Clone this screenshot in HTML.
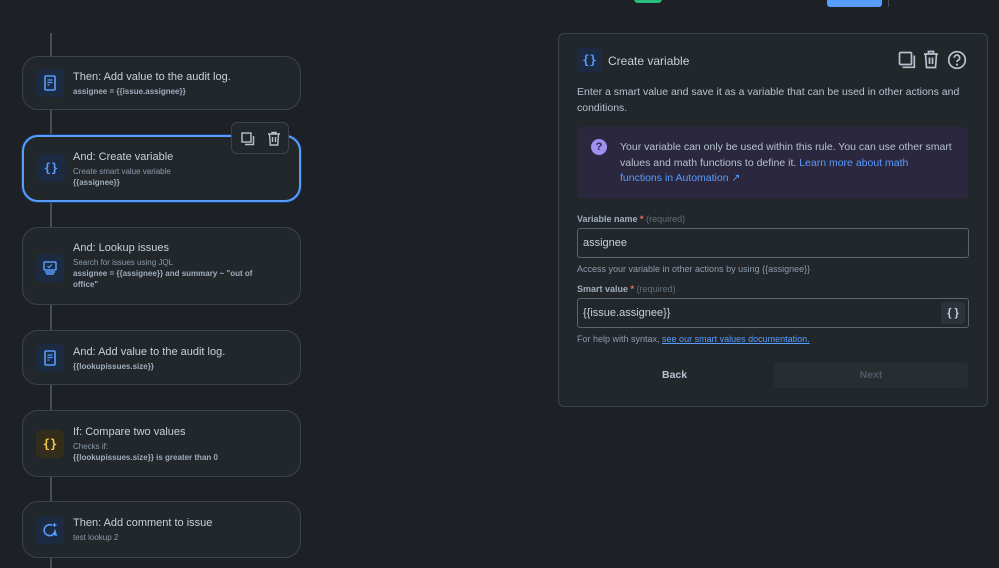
<!DOCTYPE html>
<html><head><style>
*{box-sizing:border-box;margin:0;padding:0}
body{width:999px;height:568px;background:#1d2125;font-family:"Liberation Sans",sans-serif;position:relative;overflow:hidden;color:#b6c2cf}
.line{position:absolute;left:50px;width:2px;background:#454f59}
.card{position:absolute;left:22px;width:279px;border:1px solid #3b444c;border-radius:16px;background:#22272b}
.card.sel{border:2px solid #579dff;box-shadow:0 0 0 1px #1d3a6a}
.ic{position:absolute;left:13px;width:28px;height:28px;border-radius:6px;background:#1c2b41;display:flex;align-items:center;justify-content:center}
.txt{position:absolute;left:50px;right:10px}
.t{font-size:11px;color:#c7d1db;line-height:14px}
.s{font-size:8px;color:#8c9bab;line-height:11px}
.b{font-size:8px;font-weight:bold;color:#9fadbc;line-height:11px}
.br{font-family:"DejaVu Sans Mono",monospace;font-weight:bold;font-size:12px;color:#579dff}
.panel{position:absolute;left:558px;top:33px;width:430px;height:374px;border:1px solid #3b444c;border-radius:6px;background:#22272b}
.lab{position:absolute;left:18px;font-size:9px;font-weight:bold;color:#9fadbc}
.lab i{color:#f87168;font-style:normal}
.lab span{color:#626f7c;font-weight:normal}
.inp{position:absolute;left:18px;width:392px;height:30px;border:1px solid #5a6570;border-radius:3px;background:#22272b;font-size:11px;color:#c7d1db;padding:8px 5px}
.help{position:absolute;left:18px;font-size:9px;color:#8c9bab}
</style></head><body>
<div style="position:absolute;left:634px;top:-5px;width:28px;height:8px;border-radius:4px;background:#2abb7f"></div>
<div style="position:absolute;left:827px;top:0;width:55px;height:7px;border-radius:0 0 3px 3px;background:#579dff"></div>
<div style="position:absolute;left:888px;top:0;width:1px;height:7px;background:#454f59"></div>

<div class="line" style="top:33px;height:535px"></div>

<div class="card" style="top:56px;height:54px">
 <div class="ic" style="top:12px"><svg width="14" height="16" viewBox="0 0 14 16"><rect x="2" y="1" width="10" height="14" rx="1" fill="none" stroke="#579dff" stroke-width="1.6"/><path d="M4.5 5h5M4.5 7.5h5M4.5 10h2" stroke="#579dff" stroke-width="1.3"/></svg></div>
 <div class="txt" style="top:13px"><div class="t">Then: Add value to the audit log.</div><div class="b" style="margin-top:2px">assignee = {{issue.assignee}}</div></div>
</div>

<div class="card sel" style="top:135px;height:67px">
 <div class="ic" style="top:17px"><span class="br">{}</span></div>
 <div class="txt" style="top:13px;left:49px"><div class="t">And: Create variable</div><div class="s" style="margin-top:2px">Create smart value variable</div><div class="b">{{assignee}}</div></div>
</div>
<div style="position:absolute;left:231px;top:122px;width:58px;height:32px;border:1px solid #3b444c;border-radius:6px;background:#22272b">
 <svg style="position:absolute;left:9px;top:9px" width="14" height="14" viewBox="0 0 14 14"><rect x="1" y="1" width="9" height="9" fill="none" stroke="#b6c2cf" stroke-width="1.4"/><path d="M4 12.5h8.5V4" fill="none" stroke="#b6c2cf" stroke-width="1.4"/></svg>
 <svg style="position:absolute;left:35px;top:8px" width="14" height="15" viewBox="0 0 14 15"><path d="M1 3h12M5 3V1.5h4V3M2.5 3l.8 11h7.4l.8-11M5.5 6v5M8.5 6v5" fill="none" stroke="#b6c2cf" stroke-width="1.4"/></svg>
</div>

<div class="card" style="top:227px;height:78px">
 <div class="ic" style="top:26px"><svg width="16" height="16" viewBox="0 0 16 16"><rect x="2" y="2" width="12" height="8" rx="1" fill="none" stroke="#579dff" stroke-width="1.5"/><path d="M5.5 6l1.5 1.5 3-3" fill="none" stroke="#579dff" stroke-width="1.2"/><path d="M3 12h10M4 14h8" stroke="#579dff" stroke-width="1.4"/></svg></div>
 <div class="txt" style="top:13px;right:30px"><div class="t">And: Lookup issues</div><div class="s" style="margin-top:2px">Search for issues using JQL</div><div class="b">assignee = {{assignee}} and summary ~ "out of office"</div></div>
</div>

<div class="card" style="top:330px;height:55px">
 <div class="ic" style="top:13px"><svg width="14" height="16" viewBox="0 0 14 16"><rect x="2" y="1" width="10" height="14" rx="1" fill="none" stroke="#579dff" stroke-width="1.6"/><path d="M4.5 5h5M4.5 7.5h5M4.5 10h2" stroke="#579dff" stroke-width="1.3"/></svg></div>
 <div class="txt" style="top:14px"><div class="t">And: Add value to the audit log.</div><div class="b" style="margin-top:2px">{{lookupissues.size}}</div></div>
</div>

<div class="card" style="top:410px;height:67px">
 <div class="ic" style="top:19px;background:#332e1b"><span class="br" style="color:#f5cd47">{}</span></div>
 <div class="txt" style="top:14px"><div class="t">If: Compare two values</div><div class="s" style="margin-top:2px">Checks if:</div><div class="b">{{lookupissues.size}} is greater than 0</div></div>
</div>

<div class="card" style="top:501px;height:57px">
 <div class="ic" style="top:14px"><svg width="16" height="16" viewBox="0 0 16 16"><path d="M10 3.2A5.5 5.5 0 1 0 13 9.5L14 13l-3.5-1" fill="none" stroke="#579dff" stroke-width="1.6"/><path d="M12.5 1v4M10.5 3h4" stroke="#579dff" stroke-width="1.2"/></svg></div>
 <div class="txt" style="top:14px"><div class="t">Then: Add comment to issue</div><div class="s" style="margin-top:2px">test lookup 2</div></div>
</div>

<div class="panel">
 <div style="position:absolute;left:18px;top:14px;width:25px;height:24px;border-radius:4px;background:#1c2b41;display:flex;align-items:center;justify-content:center"><span class="br">{}</span></div>
 <div style="position:absolute;left:49px;top:20px;font-size:12px;color:#c7d1db">Create variable</div>
 <svg style="position:absolute;left:339px;top:17px" width="18" height="18" viewBox="0 0 18 18"><rect x="1.5" y="1.5" width="12" height="12" rx="1" fill="none" stroke="#b6c2cf" stroke-width="1.7"/><path d="M4.5 16.3h11.8V4.5" fill="none" stroke="#b6c2cf" stroke-width="1.7"/></svg>
 <svg style="position:absolute;left:364px;top:16px" width="16" height="19" viewBox="0 0 16 19"><path d="M1 4h14M5.5 4V1.5h5V4M2.5 4l1 13.5h9l1-13.5M6.5 7.5v6.5M9.5 7.5v6.5" fill="none" stroke="#b6c2cf" stroke-width="1.7"/></svg>
 <svg style="position:absolute;left:388px;top:16px" width="20" height="20" viewBox="0 0 20 20"><circle cx="10" cy="10" r="8.3" fill="none" stroke="#b6c2cf" stroke-width="1.7"/><path d="M7.3 7.8a2.7 2.7 0 1 1 3.8 2.4c-.8.4-1.1.9-1.1 1.8" fill="none" stroke="#b6c2cf" stroke-width="1.7"/><circle cx="10" cy="14.6" r="1.1" fill="#b6c2cf"/></svg>
 <div style="position:absolute;left:18px;top:51px;width:400px;font-size:10.5px;line-height:15.5px;color:#b6c2cf">Enter a smart value and save it as a variable that can be used in other actions and conditions.</div>
 <div style="position:absolute;left:18px;top:93px;width:391px;height:71px;background:#2b273f;border-radius:3px">
  <div style="position:absolute;left:14px;top:12px;width:16px;height:16px;border-radius:50%;background:#9f8fef;color:#2b273f;font-size:11px;font-weight:bold;text-align:center;line-height:16px">?</div>
  <div style="position:absolute;left:43px;top:13px;width:332px;font-size:10.5px;line-height:15.5px;color:#b6c2cf">Your variable can only be used within this rule. You can use other smart values and math functions to define it. <span style="color:#579dff">Learn more about math functions in Automation ↗</span></div>
 </div>
 <div class="lab" style="top:180px">Variable name <i>*</i> <span>(required)</span></div>
 <div class="inp" style="top:194px">assignee</div>
 <div class="help" style="top:230px">Access your variable in other actions by using {{assignee}}</div>
 <div class="lab" style="top:250px">Smart value <i>*</i> <span>(required)</span></div>
 <div class="inp" style="top:264px">{{issue.assignee}}<div style="position:absolute;right:3px;top:3px;width:24px;height:22px;background:#2c333a;border-radius:3px;text-align:center;line-height:22px;font-size:11px;font-weight:bold;color:#c7d1db">{ }</div></div>
 <div class="help" style="top:300px">For help with syntax, <span style="color:#579dff;text-decoration:underline">see our smart values documentation.</span></div>
 <div style="position:absolute;left:103px;top:335px;font-size:10.5px;font-weight:bold;color:#b6c2cf">Back</div>
 <div style="position:absolute;left:215px;top:329px;width:194px;height:25px;background:#282d31;border-radius:3px;text-align:center;line-height:25px;font-size:10.5px;font-weight:bold;color:#4e5a66">Next</div>
</div>
</body></html>
